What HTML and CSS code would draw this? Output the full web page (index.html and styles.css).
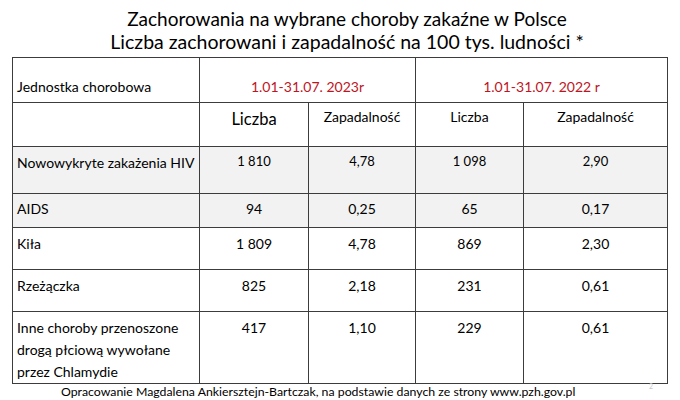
FILE: index.html
```html
<!DOCTYPE html>
<html lang="pl">
<head>
<meta charset="utf-8">
<title>Zachorowania na wybrane choroby zakaźne w Polsce</title>
<link rel="stylesheet" href="styles.css">
</head>
<body>
<div class="slide">
  <h1 class="title"><span class="t1">Zachorowania na wybrane choroby zakaźne w Polsce</span><br>Liczba zachorowani i zapadalność na 100 tys. ludności *</h1>
  <table class="data">
    <colgroup>
      <col class="c-name"><col class="c-n1"><col class="c-z1"><col class="c-n2"><col class="c-z2">
    </colgroup>
    <tr class="r-head">
      <td class="name">Jednostka chorobowa</td>
      <td class="period" colspan="2">1.01-31.07. 2023r</td>
      <td class="period" colspan="2">1.01-31.07. 2022 r</td>
    </tr>
    <tr class="r-sub">
      <td></td>
      <td class="big">Liczba</td>
      <td>Zapadalność</td>
      <td>Liczba</td>
      <td>Zapadalność</td>
    </tr>
    <tr class="r-hiv shaded">
      <td class="name">Nowowykryte zakażenia HIV</td>
      <td class="small">1 810</td>
      <td class="small">4,78</td>
      <td class="small">1 098</td>
      <td class="small">2,90</td>
    </tr>
    <tr class="r-aids shaded">
      <td class="name">AIDS</td>
      <td>94</td><td>0,25</td><td>65</td><td>0,17</td>
    </tr>
    <tr class="r-kila">
      <td class="name">Kiła</td>
      <td>1 809</td><td>4,78</td><td>869</td><td>2,30</td>
    </tr>
    <tr class="r-rze">
      <td class="name">Rzeżączka</td>
      <td>825</td><td>2,18</td><td>231</td><td>0,61</td>
    </tr>
    <tr class="r-inne">
      <td class="name">Inne choroby przenoszone drogą płciową wywołane przez Chlamydie</td>
      <td>417</td><td>1,10</td><td>229</td><td>0,61</td>
    </tr>
  </table>
  <div class="footer">
    <p class="source">Opracowanie Magdalena Ankiersztejn-Bartczak, na podstawie danych ze strony www.pzh.gov.pl</p>
    <span class="pagenum">2</span>
  </div>
</div>
</body>
</html>
```

FILE: styles.css
```css
html, body {
  margin: 0;
  padding: 0;
  background: #ffffff;
}

body {
  font-family: "Lato", "Open Sans", sans-serif;
  color: #000000;
  width: 680px;
  height: 400px;
  overflow: hidden;
}

.slide {
  padding: 7px 12px 0 12px;
}

.title {
  margin: 0 0 4px 0;
  padding-left: 14px;
  font-size: 19.5px;
  line-height: 23px;
  font-weight: 400;
  text-align: center;
  color: #000000;
}

.t1 {
  font-size: 19px;
}

.data {
  border-collapse: collapse;
  table-layout: fixed;
  width: 655px;
}

.c-name { width: 187px; }
.c-n1 { width: 109px; }
.c-z1 { width: 107px; }
.c-n2 { width: 108px; }
.c-z2 { width: 144px; }

.data td {
  border: 1px solid #3c3c3c;
  padding: 5px 4px 0 4px;
  vertical-align: top;
  text-align: center;
  font-size: 14px;
  line-height: 22px;
  color: #000000;
}

.data td.name {
  text-align: left;
}

.r-head td { height: 45px; padding-top: 18px; box-sizing: border-box; }
.r-sub td { height: 44px; padding-top: 3px; box-sizing: border-box; }
.r-hiv td { height: 47px; box-sizing: border-box; }
.r-aids td { height: 34px; padding-top: 4px; box-sizing: border-box; }
.r-kila td { height: 42px; box-sizing: border-box; }
.r-rze td { height: 42px; box-sizing: border-box; }
.r-inne td { height: 72px; padding-top: 5px; box-sizing: border-box; }

.shaded td { background: #f2f2f2; }

.data td.period {
  color: #c0141e;
}

.data td.big {
  font-size: 16.5px;
  padding-top: 5px;
}

.data td.small {
  font-size: 13px;
  padding-top: 3px;
}

.footer {
  position: relative;
}

.source {
  margin: 0;
  padding-left: 49px;
  font-size: 12.3px;
  line-height: 16px;
  color: #000000;
}

.pagenum {
  position: absolute;
  right: 15px;
  top: -2px;
  font-size: 7px;
  color: #c8c8c8;
}
```
